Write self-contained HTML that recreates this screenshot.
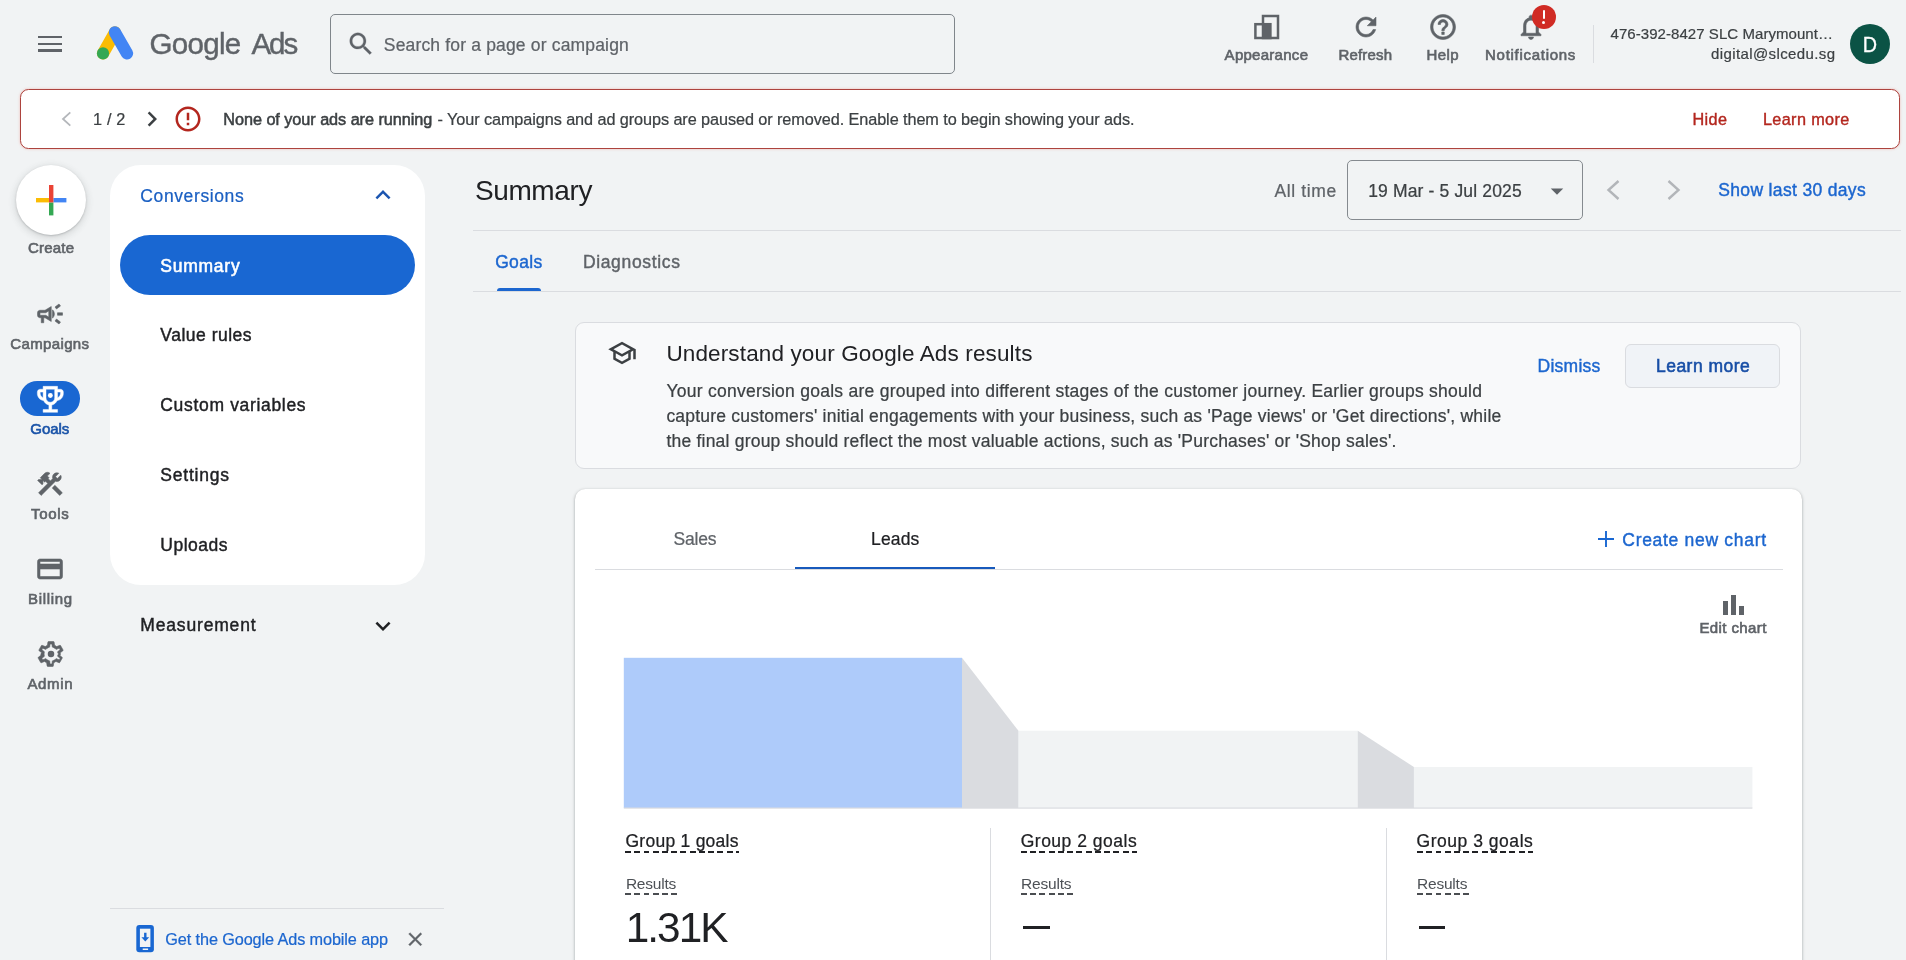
<!DOCTYPE html>
<html lang="en">
<head>
<meta charset="utf-8">
<title>Summary - Google Ads</title>
<style>
html,body{margin:0;padding:0;}
body{width:1906px;height:960px;overflow:hidden;background:#f1f3f4;position:relative;font-family:"Liberation Sans",sans-serif;}
.a{position:absolute;}
.t{position:absolute;white-space:pre;font-family:"Liberation Sans",sans-serif;}
svg{position:absolute;display:block;overflow:visible;}
.ln{position:absolute;background:#dadce0;}
.dash{position:absolute;height:1.800px;background:repeating-linear-gradient(90deg,currentColor 0,currentColor 5.800px,transparent 5.800px,transparent 9.250px);}
</style>
</head>
<body>

<!-- ===== top bar ===== -->
<div class="a" style="left:38px;top:36px;width:24px;height:2.4px;background:#5f6368"></div>
<div class="a" style="left:38px;top:42.6px;width:24px;height:2.4px;background:#5f6368"></div>
<div class="a" style="left:38px;top:49.2px;width:24px;height:2.4px;background:#5f6368"></div>

<!-- logo -->
<svg style="left:94px;top:22px" width="44" height="42" viewBox="94 22 44 42">
  <line x1="114.900" y1="32.400" x2="103" y2="53.400" stroke="#fbbc04" stroke-width="12.200" stroke-linecap="round"/>
  <line x1="114.900" y1="32.400" x2="127" y2="53.400" stroke="#4285f4" stroke-width="12.200" stroke-linecap="round"/>
  <circle cx="103" cy="53.400" r="6.100" fill="#34a853"/>
</svg>

<!-- search box -->
<div class="a" style="left:330px;top:14px;width:623px;height:57.5px;border:1.2px solid #80868b;border-radius:5px;"></div>
<svg style="left:346.200px;top:29.300px" width="30" height="30" viewBox="0 0 24 24"><path fill="#5f6368" stroke="#5f6368" stroke-width="0.200" stroke-linejoin="round" d="M15.5 14h-.79l-.28-.27C15.41 12.59 16 11.11 16 9.5 16 5.91 13.09 3 9.5 3S3 5.91 3 9.5 5.91 16 9.5 16c1.61 0 3.09-.59 4.23-1.57l.27.28v.79l5 4.99L20.49 19l-4.99-5zm-6 0C7.01 14 5 11.99 5 9.500S7.010 5 9.500 5 14 7.010 14 9.500 11.990 14 9.500 14z"/></svg>

<!-- appearance icon -->
<svg style="left:1250px;top:10px" width="34" height="34" viewBox="1250 10 34 34">
  <rect x="1263" y="16" width="15" height="22" fill="none" stroke="#5f6368" stroke-width="2.5"/>
  <rect x="1255.400" y="24.200" width="15" height="13.800" fill="none" stroke="#5f6368" stroke-width="2.5"/>
  <rect x="1263" y="24.200" width="7.400" height="13.800" fill="#5f6368"/>
</svg>
<!-- refresh -->
<svg style="left:1350.500px;top:12px" width="30" height="30" viewBox="0 0 24 24"><path fill="#5f6368" stroke="#5f6368" stroke-width="0.450" stroke-linejoin="round" d="M17.65 6.35C16.2 4.9 14.21 4 12 4c-4.42 0-7.99 3.58-7.99 8s3.57 8 7.99 8c3.73 0 6.84-2.55 7.73-6h-2.080c-.82 2.330-3.040 4-5.650 4-3.310 0-6-2.690-6-6s2.690-6 6-6c1.660 0 3.140.69 4.220 1.780L13 11h7V4l-2.350 2.350z"/></svg>
<!-- help -->
<svg style="left:1427.600px;top:11.700px" width="30" height="30" viewBox="0 0 24 24"><path fill="#5f6368" stroke="#5f6368" stroke-width="0.450" stroke-linejoin="round" d="M11 18h2v-2h-2v2zm1-16C6.48 2 2 6.48 2 12s4.48 10 10 10 10-4.48 10-10S17.520 2 12 2zm0 18c-4.410 0-8-3.590-8-8s3.590-8 8-8 8 3.590 8 8-3.590 8-8 8zm0-14c-2.210 0-4 1.790-4 4h2c0-1.100.9-2 2-2s2 .9 2 2c0 2-3 1.750-3 5h2c0-2.250 3-2.500 3-5 0-2.210-1.790-4-4-4z"/></svg>
<!-- bell -->
<svg style="left:1515.900px;top:12.300px" width="30" height="30" viewBox="0 0 24 24"><path fill="#5f6368" stroke="#5f6368" stroke-width="0.450" stroke-linejoin="round" d="M12 22c1.100 0 2-.9 2-2h-4c0 1.100.9 2 2 2zm6-6v-5c0-3.070-1.630-5.640-4.500-6.320V4c0-.83-.67-1.500-1.500-1.500s-1.500.67-1.500 1.500v.68C7.640 5.360 6 7.920 6 11v5l-2 2v1h16v-1l-2-2zm-2 1H8v-6c0-2.480 1.510-4.500 4-4.500s4 2.020 4 4.500v6z"/></svg>
<div class="a" style="left:1531.800px;top:5.100px;width:24px;height:24px;border-radius:50%;background:#d02b24;"></div>
<div class="a" style="left:1542.600px;top:10.200px;width:2.600px;height:9px;background:#fff;border-radius:1px"></div>
<div class="a" style="left:1542.400px;top:21.200px;width:3px;height:3px;background:#fff;border-radius:50%"></div>

<div class="a" style="left:1593px;top:25px;width:1.300px;height:38px;background:#dadce0"></div>
<div class="a" style="left:1849.800px;top:23.800px;width:40px;height:40px;border-radius:50%;background:#0b5345;"></div>

<!-- ===== alert banner ===== -->
<div class="a" style="left:20px;top:89px;width:1877.600px;height:57.600px;border:1.200px solid #ad433e;border-radius:8.500px;background:#fff;box-shadow:0 0 2.500px rgba(234,67,53,.35);"></div>
<svg style="left:58px;top:108px" width="16" height="22" viewBox="58 108 16 22"><polyline points="70.300,112.300 63,119 70.300,125.700" fill="none" stroke="#b4b7bb" stroke-width="1.800"/></svg>
<svg style="left:136.500px;top:104.100px" width="30" height="30" viewBox="0 0 24 24"><path fill="#3c4043" d="M10 6L8.590 7.410 13.170 12l-4.580 4.590L10 18l6-6z"/></svg>
<svg style="left:173px;top:104.100px" width="30" height="30" viewBox="0 0 24 24"><path fill="#b3261e" d="M11 15h2v2h-2zm0-8h2v6h-2zm.99-5C6.470 2 2 6.480 2 12s4.470 10 9.990 10C17.520 22 22 17.520 22 12S17.520 2 11.990 2zM12 20c-4.420 0-8-3.580-8-8s3.580-8 8-8 8 3.580 8 8-3.580 8-8 8z"/></svg>

<!-- ===== left rail ===== -->
<div class="a" style="left:16px;top:165px;width:70px;height:70px;border-radius:50%;background:#fff;box-shadow:0 1px 2px rgba(60,64,67,.25),0 2px 6px 2px rgba(60,64,67,.12);"></div>
<svg style="left:36px;top:185px" width="30" height="30" viewBox="0 0 30 30">
  <rect x="13" y="0" width="4.400" height="13" fill="#ea4335"/>
  <rect x="13" y="17.400" width="4.400" height="13" fill="#34a853"/>
  <rect x="0" y="13" width="13" height="4.400" fill="#fbbc04"/>
  <rect x="17.400" y="13" width="13" height="4.400" fill="#4285f4"/>
  <rect x="13" y="13" width="4.400" height="4.400" fill="#ea4335"/>
</svg>
<!-- campaigns -->
<svg style="left:35px;top:299px" width="30" height="30" viewBox="0 0 24 24"><path fill="#5f6368" stroke="#5f6368" stroke-width="0.450" stroke-linejoin="round" d="M18 11v2h4v-2h-4zm-2 6.610c.96.71 2.210 1.650 3.200 2.390.4-.53.8-1.070 1.200-1.600-.99-.74-2.240-1.680-3.200-2.400-.4.54-.8 1.080-1.200 1.610zM20.400 5.600c-.4-.53-.8-1.070-1.200-1.600-.99.74-2.240 1.680-3.200 2.400.4.53.8 1.070 1.200 1.600.96-.72 2.210-1.650 3.200-2.400zM4 9c-1.100 0-2 .9-2 2v2c0 1.100.9 2 2 2h1v4h2v-4h1l5 3V6L8 9H4zm5.030 1.710L11 9.530v4.940l-1.970-1.180-.48-.29H4v-2h4.550l.48-.29zM15.500 12c0-1.330-.58-2.530-1.500-3.350v6.690c.92-.81 1.500-2.010 1.500-3.340z"/></svg>
<!-- goals -->
<div class="a" style="left:19.700px;top:381.300px;width:60.600px;height:34.400px;border-radius:17.200px;background:#1967d2;"></div>
<svg style="left:32.900px;top:381.800px" width="34.700" height="34.700" viewBox="0 0 24 24"><path fill="#fff" stroke="#fff" stroke-width="0.300" d="M19 5h-2V3H7v2H5c-1.100 0-2 .9-2 2v1c0 2.550 1.920 4.630 4.390 4.940.63 1.500 1.980 2.630 3.610 2.960V19H7v2h10v-2h-4v-3.100c1.630-.33 2.980-1.460 3.610-2.960C19.080 12.630 21 10.550 21 8V7c0-1.100-.9-2-2-2zM5 8V7h2v3.820C5.840 10.400 5 9.300 5 8zm7 6c-1.650 0-3-1.350-3-3V5h6v6c0 1.650-1.350 3-3 3zm7-6c0 1.300-.84 2.400-2 2.820V7h2v1z"/><circle cx="12" cy="9.300" r="1.700" fill="#fff"/></svg>
<!-- tools -->
<svg style="left:35px;top:468.500px" width="30" height="30" viewBox="0 0 24 24"><path fill="#5f6368" stroke="#5f6368" stroke-width="0.450" stroke-linejoin="round" d="M13.783 15.172l2.121-2.121 5.996 5.996-2.121 2.121zM17.500 10c1.930 0 3.500-1.570 3.500-3.500 0-.58-.16-1.120-.41-1.600l-2.700 2.700-1.490-1.490 2.700-2.700c-.48-.25-1.020-.41-1.600-.41C15.570 3 14 4.570 14 6.500c0 .41.08.8.21 1.160l-1.850 1.850-1.780-1.780.71-.71-1.410-1.410L12 3.490c-1.170-1.170-3.070-1.170-4.240 0L4.220 7.030l1.410 1.410H2.810l-.71.71 3.540 3.540.71-.71V9.150l1.410 1.410.71-.71 1.780 1.780-7.410 7.410 2.120 2.120L16.340 9.790c.36.130.75.210 1.160.21z"/></svg>
<!-- billing -->
<svg style="left:35px;top:554px" width="30" height="30" viewBox="0 0 24 24"><path fill="#5f6368" stroke="#5f6368" stroke-width="0.450" stroke-linejoin="round" d="M20 4H4c-1.110 0-1.990.89-1.990 2L2 18c0 1.110.89 2 2 2h16c1.110 0 2-.89 2-2V6c0-1.110-.89-2-2-2zm0 14H4v-6h16v6zm0-10H4V6h16v2z"/></svg>
<!-- admin -->
<svg style="left:35.500px;top:639px" width="30" height="30" viewBox="0 0 24 24"><path fill="#5f6368" stroke="#5f6368" stroke-width="0.450" stroke-linejoin="round" d="M19.430 12.980c.04-.32.07-.64.07-.98 0-.34-.03-.66-.07-.98l2.110-1.650c.19-.15.24-.42.12-.64l-2-3.460c-.09-.16-.26-.25-.44-.25-.06 0-.12.010-.17.030l-2.490 1c-.52-.4-1.080-.73-1.690-.98l-.38-2.650C14.460 2.180 14.250 2 14 2h-4c-.25 0-.46.18-.49.42l-.38 2.650c-.61.25-1.170.59-1.690.98l-2.490-1c-.06-.02-.12-.03-.18-.03-.17 0-.34.09-.43.25l-2 3.460c-.13.22-.07.49.12.640l2.110 1.650c-.4.32-.7.650-.7.980 0 .33.03.66.07.98l-2.110 1.650c-.19.15-.24.42-.12.640l2 3.460c.9.16.26.25.44.25.06 0 .12-.1.170-.03l2.490-1c.52.4 1.080.73 1.690.98l.38 2.650c.3.24.24.42.49.42h4c.25 0 .46-.18.49-.42l.38-2.650c.61-.25 1.170-.59 1.690-.98l2.490 1c.6.02.12.030.18.030.17 0 .34-.09.43-.25l2-3.460c.12-.22.07-.49-.12-.64l-2.110-1.650zm-1.980-1.710c.4.310.5.520.5.730 0 .21-.2.430-.5.730l-.14 1.130.89.7 1.080.84-.7 1.210-1.270-.51-1.040-.42-.9.680c-.43.32-.84.56-1.250.73l-1.060.43-.16 1.130-.2 1.350h-1.400l-.19-1.350-.16-1.130-1.060-.43c-.43-.18-.83-.41-1.230-.71l-.91-.7-1.060.43-1.270.51-.7-1.210 1.080-.84.89-.7-.14-1.130c-.03-.31-.05-.54-.05-.74s.02-.43.05-.73l.14-1.130-.89-.7-1.080-.84.7-1.210 1.270.51 1.040.42.9-.68c.43-.32.84-.56 1.250-.73l1.060-.43.16-1.130.2-1.350h1.390l.19 1.350.16 1.130 1.060.43c.43.18.83.41 1.230.71l.91.7 1.060-.43 1.270-.51.7 1.210-1.070.85-.89.7.14 1.130z"/><circle cx="12" cy="12" r="2.600" fill="#5f6368"/></svg>

<!-- ===== second-level nav panel ===== -->
<div class="a" style="left:110px;top:164.500px;width:315px;height:420.500px;border-radius:31px;background:#fff;"></div>
<svg style="left:367.500px;top:180px" width="30" height="30" viewBox="0 0 24 24"><path fill="#1b55b0" d="M12 8l-6 6 1.410 1.410L12 10.830l4.590 4.580L18 14z"/></svg>
<div class="a" style="left:119.700px;top:235px;width:295.300px;height:59.700px;border-radius:30px;background:#1967d2;"></div>
<svg style="left:367.500px;top:610.500px" width="30" height="30" viewBox="0 0 24 24"><path fill="#202124" d="M16.590 8.590L12 13.170 7.410 8.590 6 10l6 6 6-6z"/></svg>

<!-- footer promo -->
<div class="ln" style="left:110px;top:908px;width:334px;height:1.300px;"></div>
<svg style="left:130px;top:920px" width="30" height="36" viewBox="130 920 30 36">
  <rect x="136.300" y="925.100" width="17.600" height="27.200" rx="3" fill="#1967d2"/>
  <rect x="139.900" y="928.700" width="10.500" height="18.300" fill="#f1f3f4"/>
  <rect x="142.700" y="948.500" width="5.400" height="1.500" fill="#f1f3f4"/>
  <path d="M144.100 932.800h2.400v4.400h2.700l-3.900 4.400-3.900-4.400h2.700z" fill="#1967d2"/>
</svg>
<svg style="left:404px;top:927.800px" width="22.500" height="22.500" viewBox="0 0 24 24"><path fill="#5f6368" stroke="#5f6368" stroke-width="0.450" stroke-linejoin="round" d="M19 6.410L17.590 5 12 10.590 6.410 5 5 6.410 10.590 12 5 17.590 6.410 19 12 13.410 17.590 19 19 17.590 13.410 12z"/></svg>

<!-- ===== main header ===== -->
<div class="a" style="left:1347.200px;top:160.300px;width:234.300px;height:58.200px;border:1.200px solid #858a8f;border-radius:5px;"></div>
<svg style="left:1542px;top:175.500px" width="30" height="30" viewBox="0 0 24 24"><path fill="#5f6368" d="M7 10l5 5 5-5z"/></svg>
<svg style="left:1606px;top:180px" width="15" height="20" viewBox="0 0 15 20"><polyline points="12.500,1 2.500,10 12.500,19" fill="none" stroke="#b2b5b9" stroke-width="2.400"/></svg>
<svg style="left:1666px;top:180px" width="15" height="20" viewBox="0 0 15 20"><polyline points="2.500,1 12.500,10 2.500,19" fill="none" stroke="#b2b5b9" stroke-width="2.400"/></svg>
<div class="ln" style="left:473px;top:230px;width:1428px;height:1.200px;"></div>
<div class="a" style="left:497px;top:288.300px;width:43.500px;height:3px;border-radius:3px 3px 0 0;background:#1c66cf;"></div>
<div class="ln" style="left:473px;top:291px;width:1428px;height:1.200px;"></div>

<!-- ===== info card ===== -->
<div class="a" style="left:575px;top:322.300px;width:1224.300px;height:144.500px;border:1.200px solid #dadce0;border-radius:9px;background:#f8f9fa;"></div>
<svg style="left:606.800px;top:338.200px" width="30" height="30" viewBox="0 0 24 24"><path fill="#3c4043" d="M12 3L1 9l4 2.180v6L12 21l7-3.820v-6l2-1.090V17h2V9L12 3zm6.820 6L12 12.720 5.180 9 12 5.280 18.820 9zM17 15.990l-5 2.730-5-2.730v-3.720L12 15l5-2.730v3.720z"/></svg>
<div class="a" style="left:1625px;top:344.300px;width:153.200px;height:41.600px;border:1.200px solid #dadce0;border-radius:6px;background:#f0f3f7;"></div>

<!-- ===== chart card ===== -->
<div class="a" style="left:574.500px;top:489px;width:1227px;height:500px;border-radius:10.500px;background:#fff;box-shadow:0 1px 2px rgba(60,64,67,.3),0 1px 3px 1px rgba(60,64,67,.15);"></div>
<div class="ln" style="left:595px;top:569px;width:1187.500px;height:1px;"></div>
<div class="a" style="left:795px;top:566.500px;width:200px;height:2.800px;background:#185abc;"></div>
<svg style="left:1595px;top:528px" width="22" height="22" viewBox="0 0 22 22"><path d="M11 3v16M3 11h16" stroke="#1967d2" stroke-width="1.900" fill="none"/></svg>
<!-- edit chart icon -->
<div class="a" style="left:1722.700px;top:601.200px;width:5.300px;height:13.400px;background:#5f6368"></div>
<div class="a" style="left:1730.600px;top:595px;width:5.300px;height:19.600px;background:#5f6368"></div>
<div class="a" style="left:1738.500px;top:605.800px;width:5.300px;height:8.800px;background:#5f6368"></div>

<!-- funnel -->
<svg style="left:620px;top:650px" width="1140" height="165" viewBox="620 650 1140 165">
  <rect x="1018.400" y="730.700" width="339.600" height="77.300" fill="#f1f3f4"/>
  <rect x="1413.900" y="767" width="338.500" height="41" fill="#f1f3f4"/>
  <polygon points="962,657.800 1018.400,730.700 1018.400,808 962,808" fill="#dadce0"/>
  <polygon points="1357.800,730.700 1413.900,767 1413.900,808 1357.800,808" fill="#dadce0"/>
  <rect x="623.800" y="657.800" width="338.200" height="150.200" fill="#aecbfa"/>
  <rect x="623.800" y="807.500" width="1128.600" height="1.200" fill="#dadce0"/>
</svg>
<div class="ln" style="left:989.700px;top:828px;width:1.200px;height:140px;"></div>
<div class="ln" style="left:1385.800px;top:828px;width:1.200px;height:140px;"></div>

<!-- dashed underlines -->
<div class="dash" style="left:625.1px;top:851.000px;width:114px;color:#202124"></div>
<div class="dash" style="left:1020.6px;top:851.000px;width:116.500px;color:#202124"></div>
<div class="dash" style="left:1416.6px;top:851.000px;width:116.500px;color:#202124"></div>
<div class="dash" style="left:625.1px;top:893.100px;width:52px;color:#4a4d51"></div>
<div class="dash" style="left:1020.6px;top:893.100px;width:52px;color:#4a4d51"></div>
<div class="dash" style="left:1416.6px;top:893.100px;width:52px;color:#4a4d51"></div>
<!-- em dashes -->
<div class="a" style="left:1023.400px;top:925.800px;width:26.200px;height:2.800px;background:#202124"></div>
<div class="a" style="left:1419.300px;top:925.800px;width:26.200px;height:2.800px;background:#202124"></div>

<div id="txt" style="position:absolute;left:0;top:0;width:1906px;height:960px;will-change:transform;">
<span class="t" style="left:149.40px;top:22.92px;font-size:29.5px;line-height:41px;font-weight:400;color:#5f6368;letter-spacing:-0.668px;-webkit-text-stroke:0.41px #5f6368;">Google</span>
<span class="t" style="left:251.40px;top:22.92px;font-size:29.5px;line-height:41px;font-weight:400;color:#5f6368;letter-spacing:-2.022px;-webkit-text-stroke:0.41px #5f6368;">Ads</span>
<span class="t" style="left:383.80px;top:32.69px;font-size:17.5px;line-height:24px;font-weight:400;color:#5f6368;letter-spacing:0.168px;-webkit-text-stroke:0.24px #5f6368;">Search for a page or campaign</span>
<span class="t" style="left:1224.60px;top:43.87px;font-size:15px;line-height:21px;font-weight:400;color:#5f6368;letter-spacing:0.277px;-webkit-text-stroke:0.63px #5f6368;">Appearance</span>
<span class="t" style="left:1338.45px;top:43.87px;font-size:15px;line-height:21px;font-weight:400;color:#5f6368;letter-spacing:0.195px;-webkit-text-stroke:0.63px #5f6368;">Refresh</span>
<span class="t" style="left:1426.50px;top:43.87px;font-size:15px;line-height:21px;font-weight:400;color:#5f6368;letter-spacing:0.380px;-webkit-text-stroke:0.63px #5f6368;">Help</span>
<span class="t" style="left:1485.05px;top:43.87px;font-size:15px;line-height:21px;font-weight:400;color:#5f6368;letter-spacing:0.716px;-webkit-text-stroke:0.63px #5f6368;">Notifications</span>
<span class="t" style="left:1610.50px;top:23.37px;font-size:15px;line-height:21px;font-weight:400;color:#3c4043;letter-spacing:0.059px;-webkit-text-stroke:0.21px #3c4043;">476-392-8427 SLC Marymount…</span>
<span class="t" style="left:1711.00px;top:43.37px;font-size:15px;line-height:21px;font-weight:400;color:#3c4043;letter-spacing:0.388px;-webkit-text-stroke:0.21px #3c4043;">digital@slcedu.sg</span>
<span class="t" style="left:1861.65px;top:29.04px;font-size:22px;line-height:31px;font-weight:400;color:#ffffff;letter-spacing:0.000px;-webkit-text-stroke:0.31px #ffffff;transform:scaleX(0.9);">D</span>
<span class="t" style="left:93.00px;top:107.78px;font-size:16.25px;line-height:23px;font-weight:400;color:#3c4043;letter-spacing:0.169px;-webkit-text-stroke:0.23px #3c4043;">1 / 2</span>
<span class="t" style="left:223.30px;top:107.78px;font-size:16.25px;line-height:23px;font-weight:400;color:#3c4043;letter-spacing:-0.055px;-webkit-text-stroke:0.52px #3c4043;">None of your ads are running</span>
<span class="t" style="left:437.50px;top:107.78px;font-size:16.25px;line-height:23px;font-weight:400;color:#3c4043;letter-spacing:-0.084px;-webkit-text-stroke:0.23px #3c4043;">- Your campaigns and ad groups are paused or removed. Enable them to begin showing your ads.</span>
<span class="t" style="left:1692.40px;top:108.48px;font-size:16.25px;line-height:23px;font-weight:400;color:#b3261e;letter-spacing:0.393px;-webkit-text-stroke:0.39px #b3261e;">Hide</span>
<span class="t" style="left:1762.90px;top:108.48px;font-size:16.25px;line-height:23px;font-weight:400;color:#b3261e;letter-spacing:0.366px;-webkit-text-stroke:0.39px #b3261e;">Learn more</span>
<span class="t" style="left:28.00px;top:237.16px;font-size:15px;line-height:21px;font-weight:400;color:#5f6368;letter-spacing:0.194px;-webkit-text-stroke:0.63px #5f6368;">Create</span>
<span class="t" style="left:10.35px;top:333.17px;font-size:15px;line-height:21px;font-weight:400;color:#5f6368;letter-spacing:0.353px;-webkit-text-stroke:0.63px #5f6368;">Campaigns</span>
<span class="t" style="left:30.30px;top:417.97px;font-size:15px;line-height:21px;font-weight:400;color:#1a53a8;letter-spacing:-0.047px;-webkit-text-stroke:0.63px #1a53a8;">Goals</span>
<span class="t" style="left:31.05px;top:503.17px;font-size:15px;line-height:21px;font-weight:400;color:#5f6368;letter-spacing:0.667px;-webkit-text-stroke:0.63px #5f6368;">Tools</span>
<span class="t" style="left:28.00px;top:587.96px;font-size:15px;line-height:21px;font-weight:400;color:#5f6368;letter-spacing:0.661px;-webkit-text-stroke:0.63px #5f6368;">Billing</span>
<span class="t" style="left:27.50px;top:673.16px;font-size:15px;line-height:21px;font-weight:400;color:#5f6368;letter-spacing:0.617px;-webkit-text-stroke:0.63px #5f6368;">Admin</span>
<span class="t" style="left:140.30px;top:183.79px;font-size:17.5px;line-height:24px;font-weight:400;color:#1a5fc2;letter-spacing:0.612px;-webkit-text-stroke:0.24px #1a5fc2;">Conversions</span>
<span class="t" style="left:160.30px;top:253.69px;font-size:17.5px;line-height:24px;font-weight:400;color:#ffffff;letter-spacing:0.754px;-webkit-text-stroke:0.56px #ffffff;">Summary</span>
<span class="t" style="left:160.30px;top:323.39px;font-size:17.5px;line-height:24px;font-weight:400;color:#202124;letter-spacing:0.503px;-webkit-text-stroke:0.42px #202124;">Value rules</span>
<span class="t" style="left:160.30px;top:393.39px;font-size:17.5px;line-height:24px;font-weight:400;color:#202124;letter-spacing:0.673px;-webkit-text-stroke:0.42px #202124;">Custom variables</span>
<span class="t" style="left:160.30px;top:463.39px;font-size:17.5px;line-height:24px;font-weight:400;color:#202124;letter-spacing:0.781px;-webkit-text-stroke:0.42px #202124;">Settings</span>
<span class="t" style="left:160.30px;top:533.39px;font-size:17.5px;line-height:24px;font-weight:400;color:#202124;letter-spacing:0.497px;-webkit-text-stroke:0.42px #202124;">Uploads</span>
<span class="t" style="left:140.30px;top:613.39px;font-size:17.5px;line-height:24px;font-weight:400;color:#202124;letter-spacing:0.830px;-webkit-text-stroke:0.42px #202124;">Measurement</span>
<span class="t" style="left:165.30px;top:927.98px;font-size:16.25px;line-height:23px;font-weight:400;color:#1c66cf;letter-spacing:-0.109px;-webkit-text-stroke:0.23px #1c66cf;">Get the Google Ads mobile app</span>
<span class="t" style="left:474.90px;top:171.11px;font-size:28px;line-height:39px;font-weight:400;color:#202124;letter-spacing:-0.366px;">Summary</span>
<span class="t" style="left:1274.50px;top:178.89px;font-size:17.5px;line-height:24px;font-weight:400;color:#5f6368;letter-spacing:0.618px;-webkit-text-stroke:0.24px #5f6368;">All time</span>
<span class="t" style="left:1368.20px;top:178.89px;font-size:17.5px;line-height:24px;font-weight:400;color:#3c4043;letter-spacing:0.151px;-webkit-text-stroke:0.24px #3c4043;">19 Mar - 5 Jul 2025</span>
<span class="t" style="left:1718.30px;top:178.49px;font-size:17.5px;line-height:24px;font-weight:400;color:#1c66cf;letter-spacing:0.336px;-webkit-text-stroke:0.42px #1c66cf;">Show last 30 days</span>
<span class="t" style="left:495.20px;top:249.69px;font-size:17.5px;line-height:24px;font-weight:400;color:#1c66cf;letter-spacing:0.320px;-webkit-text-stroke:0.42px #1c66cf;">Goals</span>
<span class="t" style="left:582.90px;top:249.69px;font-size:17.5px;line-height:24px;font-weight:400;color:#5f6368;letter-spacing:0.653px;-webkit-text-stroke:0.42px #5f6368;">Diagnostics</span>
<span class="t" style="left:666.40px;top:337.75px;font-size:22.5px;line-height:31px;font-weight:400;color:#202124;letter-spacing:0.138px;">Understand your Google Ads results</span>
<span class="t" style="left:666.40px;top:378.79px;font-size:17.5px;line-height:24px;font-weight:400;color:#3c4043;letter-spacing:0.257px;-webkit-text-stroke:0.24px #3c4043;">Your conversion goals are grouped into different stages of the customer journey. Earlier groups should</span>
<span class="t" style="left:666.40px;top:403.79px;font-size:17.5px;line-height:24px;font-weight:400;color:#3c4043;letter-spacing:0.214px;-webkit-text-stroke:0.24px #3c4043;">capture customers' initial engagements with your business, such as 'Page views' or 'Get directions', while</span>
<span class="t" style="left:666.40px;top:428.79px;font-size:17.5px;line-height:24px;font-weight:400;color:#3c4043;letter-spacing:0.216px;-webkit-text-stroke:0.24px #3c4043;">the final group should reflect the most valuable actions, such as 'Purchases' or 'Shop sales'.</span>
<span class="t" style="left:1537.50px;top:353.99px;font-size:17.5px;line-height:24px;font-weight:400;color:#1c66cf;letter-spacing:0.258px;-webkit-text-stroke:0.42px #1c66cf;">Dismiss</span>
<span class="t" style="left:1656.00px;top:353.99px;font-size:17.5px;line-height:24px;font-weight:400;color:#174ea6;letter-spacing:0.467px;-webkit-text-stroke:0.56px #174ea6;">Learn more</span>
<span class="t" style="left:673.50px;top:527.19px;font-size:17.5px;line-height:24px;font-weight:400;color:#5f6368;letter-spacing:-0.195px;-webkit-text-stroke:0.24px #5f6368;">Sales</span>
<span class="t" style="left:871.05px;top:527.19px;font-size:17.5px;line-height:24px;font-weight:400;color:#202124;letter-spacing:0.153px;-webkit-text-stroke:0.24px #202124;">Leads</span>
<span class="t" style="left:1622.30px;top:527.69px;font-size:17.5px;line-height:24px;font-weight:400;color:#1c66cf;letter-spacing:0.702px;-webkit-text-stroke:0.42px #1c66cf;">Create new chart</span>
<span class="t" style="left:1699.40px;top:617.46px;font-size:15px;line-height:21px;font-weight:400;color:#5f6368;letter-spacing:0.403px;-webkit-text-stroke:0.63px #5f6368;">Edit chart</span>
<span class="t" style="left:625.50px;top:829.39px;font-size:17.5px;line-height:24px;font-weight:400;color:#202124;letter-spacing:0.255px;-webkit-text-stroke:0.24px #202124;">Group 1 goals</span>
<span class="t" style="left:625.90px;top:872.57px;font-size:15.5px;line-height:22px;font-weight:400;color:#4d5156;letter-spacing:-0.215px;">Results</span>
<span class="t" style="left:1020.70px;top:829.39px;font-size:17.5px;line-height:24px;font-weight:400;color:#202124;letter-spacing:0.505px;-webkit-text-stroke:0.24px #202124;">Group 2 goals</span>
<span class="t" style="left:1021.10px;top:872.57px;font-size:15.5px;line-height:22px;font-weight:400;color:#4d5156;letter-spacing:-0.215px;">Results</span>
<span class="t" style="left:1416.60px;top:829.39px;font-size:17.5px;line-height:24px;font-weight:400;color:#202124;letter-spacing:0.522px;-webkit-text-stroke:0.24px #202124;">Group 3 goals</span>
<span class="t" style="left:1417.00px;top:872.57px;font-size:15.5px;line-height:22px;font-weight:400;color:#4d5156;letter-spacing:-0.215px;">Results</span>
<span class="t" style="left:625.80px;top:898.27px;font-size:42.3px;line-height:59px;font-weight:400;color:#202124;letter-spacing:-1.987px;">1.31K</span>
</div>
</body>
</html>
